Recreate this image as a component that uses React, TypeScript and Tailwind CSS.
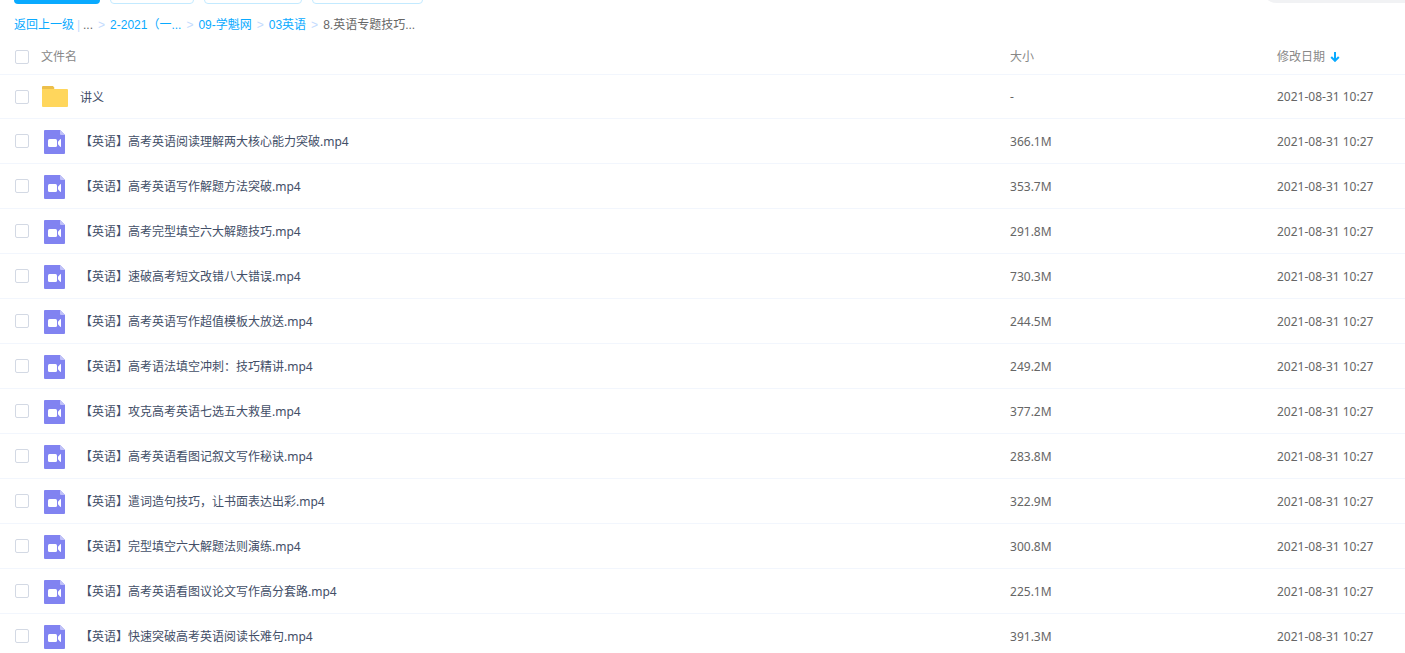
import { useState } from 'react'

type Entry = { name: string; size: string; date: string; kind: 'folder' | 'video' }

const DATE = '2021-08-31 10:27'

const entries: Entry[] = [
  { name: '讲义', size: '-', date: DATE, kind: 'folder' },
  { name: '【英语】高考英语阅读理解两大核心能力突破.mp4', size: '366.1M', date: DATE, kind: 'video' },
  { name: '【英语】高考英语写作解题方法突破.mp4', size: '353.7M', date: DATE, kind: 'video' },
  { name: '【英语】高考完型填空六大解题技巧.mp4', size: '291.8M', date: DATE, kind: 'video' },
  { name: '【英语】速破高考短文改错八大错误.mp4', size: '730.3M', date: DATE, kind: 'video' },
  { name: '【英语】高考英语写作超值模板大放送.mp4', size: '244.5M', date: DATE, kind: 'video' },
  { name: '【英语】高考语法填空冲刺：技巧精讲.mp4', size: '249.2M', date: DATE, kind: 'video' },
  { name: '【英语】攻克高考英语七选五大救星.mp4', size: '377.2M', date: DATE, kind: 'video' },
  { name: '【英语】高考英语看图记叙文写作秘诀.mp4', size: '283.8M', date: DATE, kind: 'video' },
  { name: '【英语】遣词造句技巧，让书面表达出彩.mp4', size: '322.9M', date: DATE, kind: 'video' },
  { name: '【英语】完型填空六大解题法则演练.mp4', size: '300.8M', date: DATE, kind: 'video' },
  { name: '【英语】高考英语看图议论文写作高分套路.mp4', size: '225.1M', date: DATE, kind: 'video' },
  { name: '【英语】快速突破高考英语阅读长难句.mp4', size: '391.3M', date: DATE, kind: 'video' },
]

const crumbs = ['2-2021（一...', '09-学魁网', '03英语']

function FolderIcon() {
  return (
    <svg width="26" height="22" viewBox="0 0 26 22" className="shrink-0" aria-hidden="true">
      <path d="M1 0h10l1.2 1.5V5H0V1a1 1 0 0 1 1-1z" fill="#ecbf4b" />
      <path d="M0 3h25a1 1 0 0 1 1 1v16a1 1 0 0 1-1 1H1a1 1 0 0 1-1-1z" fill="#ffd65c" />
    </svg>
  )
}

function VideoIcon() {
  return (
    <svg width="22" height="26" viewBox="0 -2 22 26" className="shrink-0" aria-hidden="true">
      <path d="M1 0h15l5 5v18a1 1 0 0 1-1 1H1a1 1 0 0 1-1-1V1a1 1 0 0 1 1-1z" fill="#8183f1" />
      <path d="M16 0l5 5h-4a1 1 0 0 1-1-1z" fill="#c0c1f8" />
      <rect x="4" y="9" width="9" height="8" rx="1.5" fill="#fff" />
      <path d="M17 9.6v6.8a.5.5 0 0 1-.8.3L14 14.3v-2.6l2.2-2.4a.5.5 0 0 1 .8.3z" fill="#fff" />
    </svg>
  )
}

function Checkbox({ label, checked, onChange }: { label: string; checked: boolean; onChange: () => void }) {
  return (
    <input
      type="checkbox"
      aria-label={label}
      checked={checked}
      onChange={onChange}
      className="block size-3.5 shrink-0 appearance-none rounded-xs border border-[#d3d9e4] bg-white checked:border-[#09aaff] checked:bg-[#09aaff]"
    />
  )
}

function Separator() {
  return <span className="w-[17px] text-center text-[#c4dbfe]">&gt;</span>
}

export default function App() {
  const [selected, setSelected] = useState<string[]>([])
  const allSelected = selected.length === entries.length

  const toggle = (name: string) =>
    setSelected(selected.includes(name) ? selected.filter((n) => n !== name) : [...selected, name])

  return (
    <div className="bg-white text-xs text-[#424e67] font-['Noto_Sans','Noto_Sans_CJK_SC',sans-serif]">
      {/* toolbar, scrolled almost out of view */}
      <div className="flex h-1 items-end justify-between overflow-hidden pl-3.5">
        <div className="flex gap-2.5">
          <button aria-label="上传" className="h-8 w-[86px] rounded-sm bg-[#09aaff]" />
          <button aria-label="新建文件夹" className="h-8 w-[84px] rounded-sm border border-[#c3eaff]" />
          <button aria-label="离线下载" className="h-8 w-[98px] rounded-sm border border-[#c3eaff]" />
          <button aria-label="我的设备" className="h-8 w-[111px] rounded-sm border border-[#c3eaff]" />
        </div>
        <input type="search" aria-label="搜索" className="mb-px h-8 w-36 rounded-l-full bg-[#f1f2f4] px-4 outline-none" />
      </div>

      <nav className="flex h-[42px] items-center px-3.5 font-['Liberation_Sans','Noto_Sans_CJK_SC',sans-serif]">
        <a href="#" className="text-[#09aaff]">返回上一级</a>
        <span className="w-[9px] text-center text-[#c4dbfe]">|</span>
        <span className="text-[#666]">...</span>
        {crumbs.map((crumb) => (
          <span key={crumb} className="flex">
            <Separator />
            <a href="#" className="text-[#09aaff]">{crumb}</a>
          </span>
        ))}
        <Separator />
        <span className="text-[#666]">8.英语专题技巧...</span>
      </nav>

      <table className="w-full table-fixed border-separate border-spacing-0 text-left">
        <thead className="text-[#888]">
          <tr className="*:h-[29px] *:border-b *:border-[#f2f6fd] *:p-0 *:pb-1.5 *:font-normal">
            <th>
              <div className="flex items-center gap-3 pl-[15px]">
                <Checkbox
                  label="全选"
                  checked={allSelected}
                  onChange={() => setSelected(allSelected ? [] : entries.map((e) => e.name))}
                />
                文件名
              </div>
            </th>
            <th className="w-[19%]">大小</th>
            <th className="w-32">
              <button className="flex items-center gap-[5px]">
                修改日期
                <svg width="10" height="10" viewBox="0 0 10 10" fill="none" stroke="#09aaff" strokeWidth="2" aria-hidden="true">
                  <path d="M5 0v8.5M1.2 5L5 8.8 8.8 5" />
                </svg>
              </button>
            </th>
          </tr>
        </thead>
        <tbody>
          {entries.map((entry) => (
            <tr
              key={entry.name}
              className="*:h-[45px] *:border-b *:border-[#f2f6fd] *:p-0 first:*:h-11 hover:bg-[#f4fbff]"
            >
              <td>
                <div className="flex items-center pl-[15px]">
                  <Checkbox
                    label={entry.name}
                    checked={selected.includes(entry.name)}
                    onChange={() => toggle(entry.name)}
                  />
                  <span className="flex w-[51px] justify-center">
                    {entry.kind === 'folder' ? <FolderIcon /> : <VideoIcon />}
                  </span>
                  <a href="#" className="truncate pt-0.5">{entry.name}</a>
                </div>
              </td>
              <td className="text-[#666]">
                <span className="block pt-px">{entry.size}</span>
              </td>
              <td className="whitespace-nowrap text-[#666]">
                <span className="block pt-px">{entry.date}</span>
              </td>
            </tr>
          ))}
        </tbody>
      </table>
    </div>
  )
}
